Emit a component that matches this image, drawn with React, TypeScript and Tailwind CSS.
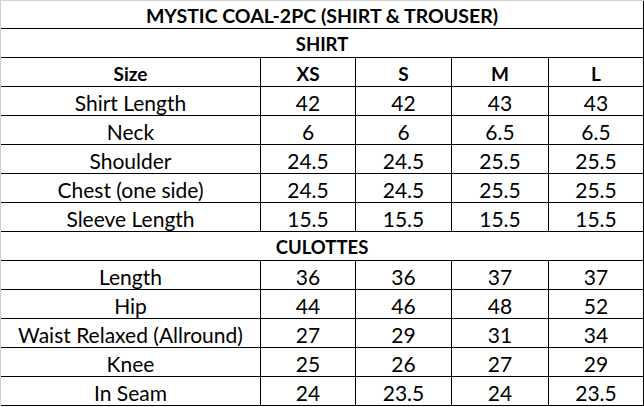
const sizes = ['XS', 'S', 'M', 'L'];

const shirt: [string, string[]][] = [
  ['Shirt Length', ['42', '42', '43', '43']],
  ['Neck', ['6', '6', '6.5', '6.5']],
  ['Shoulder', ['24.5', '24.5', '25.5', '25.5']],
  ['Chest (one side)', ['24.5', '24.5', '25.5', '25.5']],
  ['Sleeve Length', ['15.5', '15.5', '15.5', '15.5']],
];

const culottes: [string, string[]][] = [
  ['Length', ['36', '36', '37', '37']],
  ['Hip', ['44', '46', '48', '52']],
  ['Waist Relaxed (Allround)', ['27', '29', '31', '34']],
  ['Knee', ['25', '26', '27', '29']],
  ['In Seam', ['24', '23.5', '24', '23.5']],
];

const cell = 'flex h-[29px] items-center justify-center border-r border-b border-black pt-[2px]';

function FullRow({ children }: { children: React.ReactNode }) {
  return <div className={`${cell} col-span-5 text-[18.5px] font-bold`}>{children}</div>;
}

function Row({ label, values, bold }: { label: string; values: string[]; bold?: boolean }) {
  const txt = bold ? 'text-[19px] font-bold' : 'text-[21px]';
  return (
    <>
      <div className={`${cell} ${txt}`}>{label}</div>
      {values.map((v, i) => (
        <div key={i} className={`${cell} ${txt}`}>
          {v}
        </div>
      ))}
    </>
  );
}

export default function App() {
  return (
    <div className="h-[407px] w-[644px] overflow-hidden bg-white">
      <div
        className="grid grid-cols-[260px_95px_96px_97px_95px] border-t border-l border-[#cfcfcf] leading-none text-black"
        style={{ fontFamily: 'Lato, "Open Sans", sans-serif' }}
      >
        <div className="col-span-5 flex h-[28px] items-center justify-center border-r border-b border-r-black border-b-black pt-[2px] text-[19.5px] font-bold">
          MYSTIC COAL-2PC (SHIRT &amp; TROUSER)
        </div>
        <FullRow>SHIRT</FullRow>
        <Row label="Size" values={sizes} bold />
        {shirt.map(([l, v]) => (
          <Row key={l} label={l} values={v} />
        ))}
        <FullRow>CULOTTES</FullRow>
        {culottes.map(([l, v]) => (
          <Row key={l} label={l} values={v} />
        ))}
      </div>
    </div>
  );
}
